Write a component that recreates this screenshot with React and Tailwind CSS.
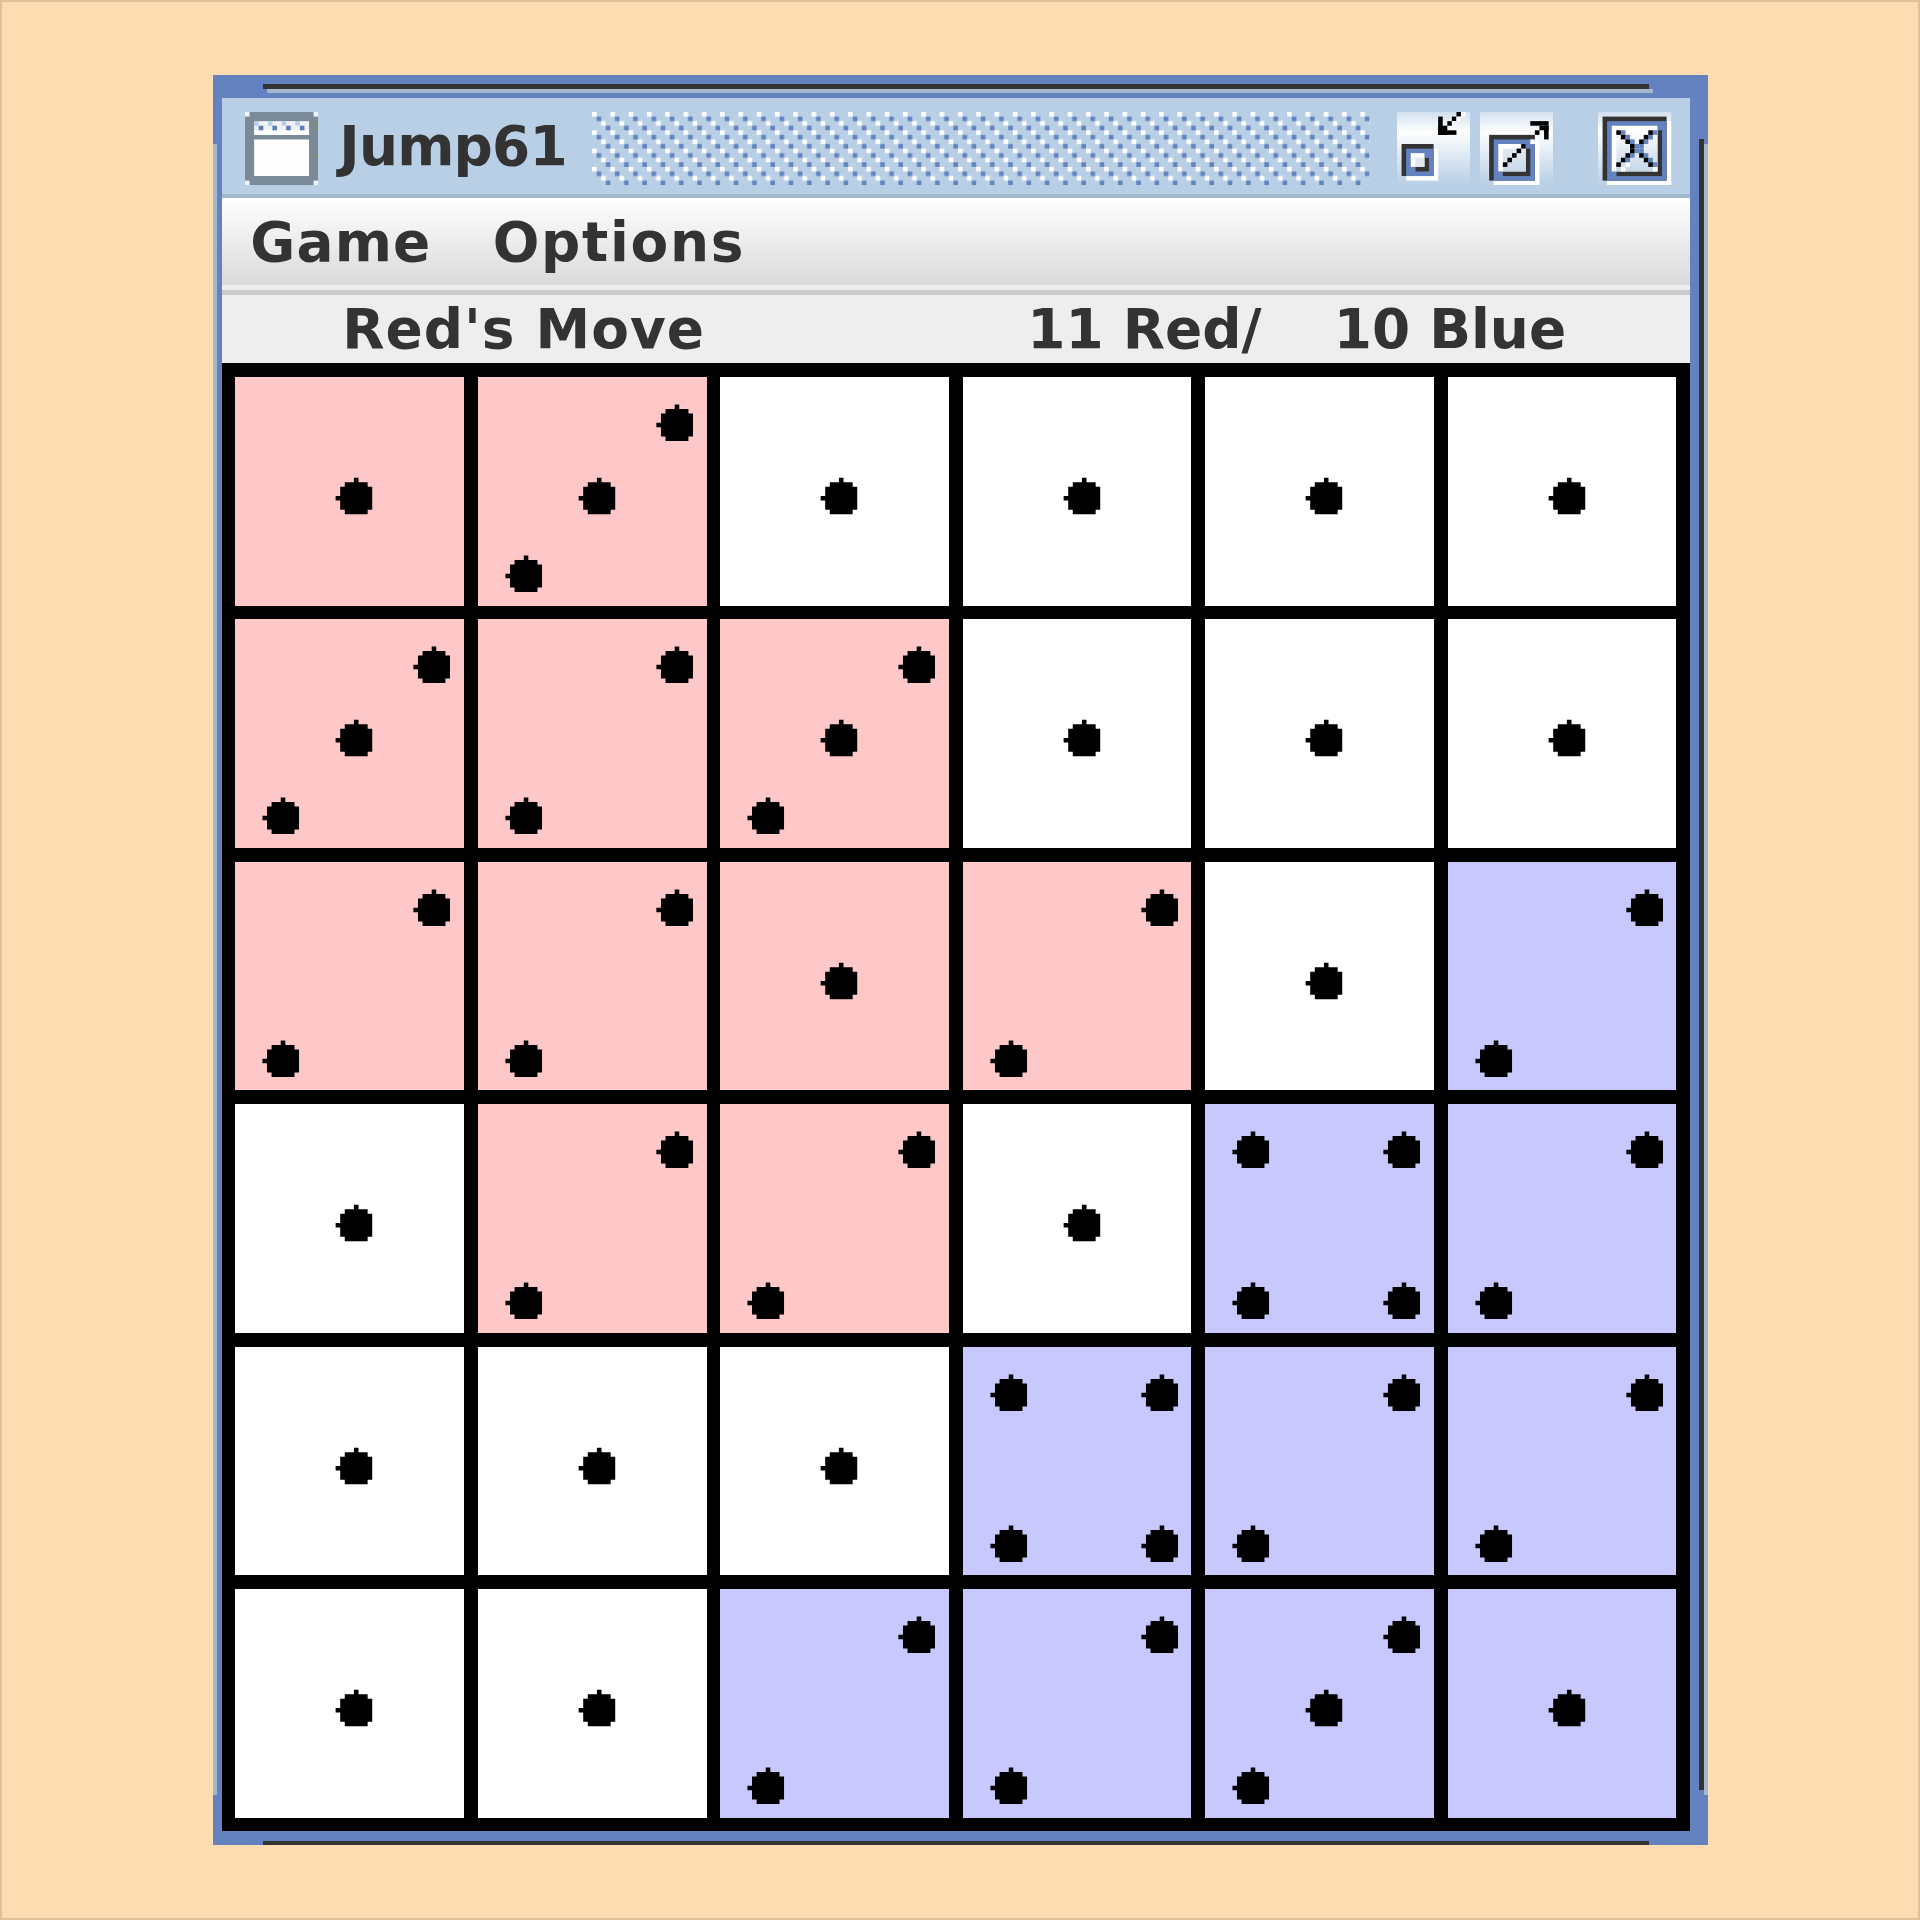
import React from "react";

const BLUE = "#6382bf";
const DARK = "#333333";

/* Rows of cells: owner (r, b or w) followed by the number of spots. */
const BOARD = [
  ["r1", "r3", "w1", "w1", "w1", "w1"],
  ["r3", "r2", "r3", "w1", "w1", "w1"],
  ["r2", "r2", "r1", "r2", "w1", "b2"],
  ["w1", "r2", "r2", "w1", "b4", "b2"],
  ["w1", "w1", "w1", "b4", "b2", "b2"],
  ["w1", "w1", "b2", "b2", "b3", "b1"],
];

const CELL_BG = { r: "bg-[#ffc8c8]", b: "bg-[#c8c8ff]", w: "bg-white" };

const SPOTS = {
  1: [[22, 22]],
  2: [[39, 6], [6, 39]],
  3: [[39, 6], [22, 22], [6, 39]],
  4: [[6, 6], [39, 6], [6, 39], [39, 39]],
};

function Cell({ value }) {
  return (
    <div className={CELL_BG[value[0]]}>
      <svg className="block h-full w-full" viewBox="0 0 50 50">
        {SPOTS[value[1]].map(([x, y]) => (
          <path
            key={x + "-" + y}
            transform={`translate(${x} ${y})`}
            d="M4 0h1v1h2v1h1v5h-1v1h-5v-1h-1v-2h-1v-1h1v-2h1v-1h2z"
          />
        ))}
      </svg>
    </div>
  );
}

/* Draws a list of [x, y, width, height, fill] on a 16-unit grid. */
function Rects({ items }) {
  return items.map(([x, y, w, h, fill], i) => (
    <rect key={i} x={x} y={y} width={w} height={h} fill={fill} />
  ));
}

function Sheen({ id }) {
  return (
    <linearGradient id={id} x1="0" y1="0" x2="0" y2="1">
      <stop offset="0" stopColor="#d2e1ef" />
      <stop offset="0.28" stopColor="#ffffff" />
      <stop offset="0.36" stopColor="#f4f8fb" />
      <stop offset="1" stopColor="#b8cfe5" />
    </linearGradient>
  );
}

function AppIcon() {
  return (
    <svg className="block size-16" viewBox="0 0 16 16">
      <Rects
        items={[
          [0, 0, 16, 16, "#7a8a99"],
          [0, 0, 1, 1, "#eef3f7"],
          [15, 0, 1, 1, "#eef3f7"],
          [0, 15, 1, 1, "#eef3f7"],
          [15, 15, 1, 1, "#eef3f7"],
          [2, 2, 12, 3, "#f1f2f5"],
          [2, 4, 12, 1, "#ffffff"],
          [2, 6, 12, 8, "#fefefe"],
          ...[2, 5, 8, 11].map((x) => [x, 2, 1, 1, "#b8cfe5"]),
          ...[3, 6, 9, 12].map((x) => [x, 3, 1, 1, "#5b7cba"]),
          [15, 2, 0.9, 2, "#7b8c78"],
          [15, 9, 0.9, 1, "#7b8c78"],
        ]}
      />
    </svg>
  );
}

function MinimizeIcon() {
  return (
    <svg className="block size-16" viewBox="0 0 16 16">
      <Sheen id="sheen-min" />
      <Rects
        items={[
          [0, 0, 16, 16, "url(#sheen-min)"],
          [2, 8, 7, 7, "#ffffff"],
          [1, 7, 7, 7, DARK],
          [2, 8, 6, 6, BLUE],
          [4, 10, 3, 3, DARK],
          [6, 9, 1, 1, BLUE],
          [3, 12, 1, 1, BLUE],
          [3, 9, 3, 3, "#ffffff"],
          [4, 10, 2, 2, "#dfe6ec"],
          [9, 1, 1, 4, "#000"],
          [9, 3, 2, 2, "#000"],
          [9, 4, 4, 1, "#000"],
          [11, 2, 1, 1, "#000"],
          [12, 1, 1, 1, "#000"],
          [13, 0, 1, 1, "#000"],
          [14, 0, 1, 1, "#ffffff"],
          [13, 1, 1, 1, "#ffffff"],
          [12, 2, 1, 1, "#ffffff"],
        ]}
      />
    </svg>
  );
}

function MaximizeIcon() {
  return (
    <svg className="block size-16" viewBox="0 0 16 16">
      <Sheen id="sheen-max" />
      <Rects
        items={[
          [0, 0, 16, 16, "url(#sheen-max)"],
          [3, 6, 10, 10, "#ffffff"],
          [2, 5, 10, 10, DARK],
          [3, 6, 9, 9, BLUE],
          [11, 6, 1, 1, "#ffffff"],
          [5, 8, 6, 6, DARK],
          [4, 7, 6, 6, "#ffffff"],
          [5, 8, 5, 5, "url(#sheen-inner)"],
          [5, 11, 1, 1, "#000"],
          [6, 10, 1, 1, "#000"],
          [7, 9, 1, 1, "#000"],
          [8, 8, 1, 1, "#000"],
          [9, 7, 1, 1, "#000"],
          [11, 2, 4, 1, "#000"],
          [13, 3, 2, 1, "#000"],
          [12, 4, 1, 1, "#000"],
          [14, 3, 1, 3, "#000"],
        ]}
      />
      <linearGradient id="sheen-inner" x1="0" y1="0" x2="0" y2="1">
        <stop offset="0" stopColor="#e3ebf2" />
        <stop offset="1" stopColor="#c8d9e9" />
      </linearGradient>
    </svg>
  );
}

function CloseIcon() {
  const black = [
    [4, 4], [5, 5], [6, 6], [7, 7], [7, 8], [6, 9], [5, 10], [4, 11],
    [11, 4], [10, 5], [9, 6], [9, 9], [10, 10], [11, 11],
  ];
  const shade = [
    [5, 4], [6, 5], [7, 6], [8, 7], [8, 8], [7, 9], [6, 10],
    [12, 4], [11, 5], [10, 6], [9, 7], [9, 8], [10, 9], [11, 10], [12, 11],
  ];
  return (
    <svg className="block size-16" viewBox="0 0 16 16">
      <Sheen id="sheen-close" />
      <linearGradient id="sheen-pane" x1="0" y1="0" x2="0" y2="1">
        <stop offset="0" stopColor="#ffffff" />
        <stop offset="1" stopColor="#c4d7e8" />
      </linearGradient>
      <Rects
        items={[
          [0, 0, 16, 16, "url(#sheen-close)"],
          [2, 15, 14, 1, "#ffffff"],
          [15, 2, 1, 14, "#ffffff"],
          [1, 1, 14, 14, DARK],
          [2, 2, 13, 13, BLUE],
          [4, 4, 10, 10, DARK],
          [3, 13, 1, 1, BLUE],
          [3, 3, 10, 10, "#ffffff"],
          [4, 4, 9, 9, "url(#sheen-pane)"],
          [5, 12, 1, 1, "#ffffff"],
          [6, 11, 1, 1, "#ffffff"],
          [12, 12, 1, 1, "#ffffff"],
          ...shade.map(([x, y]) => [x, y, 1, 1, BLUE]),
          ...black.map(([x, y]) => [x, y, 1, 1, "#000"]),
        ]}
      />
    </svg>
  );
}

function Bumps() {
  return (
    <svg className="block h-16 w-170" viewBox="0 0 170 16">
      <pattern id="bumps" width="4" height="4" patternUnits="userSpaceOnUse">
        <rect x="0" y="0" width="1" height="1" fill="#fff" />
        <rect x="2" y="2" width="1" height="1" fill="#fff" />
        <rect x="1" y="1" width="1" height="1" fill={BLUE} />
        <rect x="3" y="3" width="1" height="1" fill={BLUE} />
      </pattern>
      <rect width="170" height="16" fill="url(#bumps)" />
    </svg>
  );
}

function Label({ className = "", children }) {
  return (
    <span className={"block whitespace-pre " + className}>{children}</span>
  );
}

export default function App() {
  return (
    <div className="h-[1920px] w-[1920px] overflow-hidden border-2 border-[#e1c19b] bg-[#fddcb1] pt-[73px] pl-[210.6px]">
      {/* One spacing step is one pixel of the window's native 327 x 387 size. */}
      <div className="relative flex h-387 w-327 flex-col bg-[#6382bf] pt-5 pr-4 pb-3 pl-2 font-['DejaVu_Sans',sans-serif] text-[54.9px] leading-none font-bold text-[#333333] [--spacing:4.574px]">
        <div className="absolute top-2 left-11 h-1 w-303 bg-[#333333]" />
        <div className="absolute top-3 left-12 h-1 w-303 bg-[#a3b8cc]" />
        <div className="absolute top-15 left-0 h-361 w-1 bg-[#a3b8cc]" />
        <div className="absolute top-14 right-1 h-361 w-1 bg-[#333333]" />
        <div className="absolute top-15 right-0 h-361 w-1 bg-[#a3b8cc]" />
        <div className="absolute bottom-0 left-11 h-1 w-303 bg-[#333333]" />

        <header className="flex h-22 shrink-0 border-b-4 border-[#a3b8cc] bg-[#b8cfe5] pt-3 pl-5">
          <AppIcon />
          <div className="w-60 pt-[7.6px] pl-[21.5px]">
            <Label className="tracking-[-0.8px]">Jump61</Label>
          </div>
          <Bumps />
          <div className="flex pl-6">
            <MinimizeIcon />
            <div className="pl-2">
              <MaximizeIcon />
            </div>
            <div className="pl-10">
              <CloseIcon />
            </div>
          </div>
        </header>

        <nav className="flex h-19 shrink-0 bg-linear-to-b from-white to-[#dadada] pt-[16.5px] pl-[28.5px]">
          <div className="w-53">
            <Label className="tracking-[1.2px]">Game</Label>
          </div>
          <Label className="tracking-[1.7px]">Options</Label>
        </nav>
        <div className="h-1 shrink-0 bg-[#eeeeee]" />
        <div className="h-1 shrink-0 bg-[#cccccc]" />

        <div className="flex h-15 shrink-0 bg-[#eeeeee] pt-[7.5px] pl-[120.5px]">
          <div className="w-[685px]">
            <Label className="tracking-[1px]">Red's Move</Label>
          </div>
          <div className="w-67">
            <Label>11 Red/</Label>
          </div>
          <Label>10 Blue</Label>
        </div>

        <main className="grid h-321 w-321 shrink-0 grid-cols-6 grid-rows-6 gap-3 bg-black p-3">
          {BOARD.flat().map((value, i) => (
            <Cell key={i} value={value} />
          ))}
        </main>
      </div>
    </div>
  );
}
